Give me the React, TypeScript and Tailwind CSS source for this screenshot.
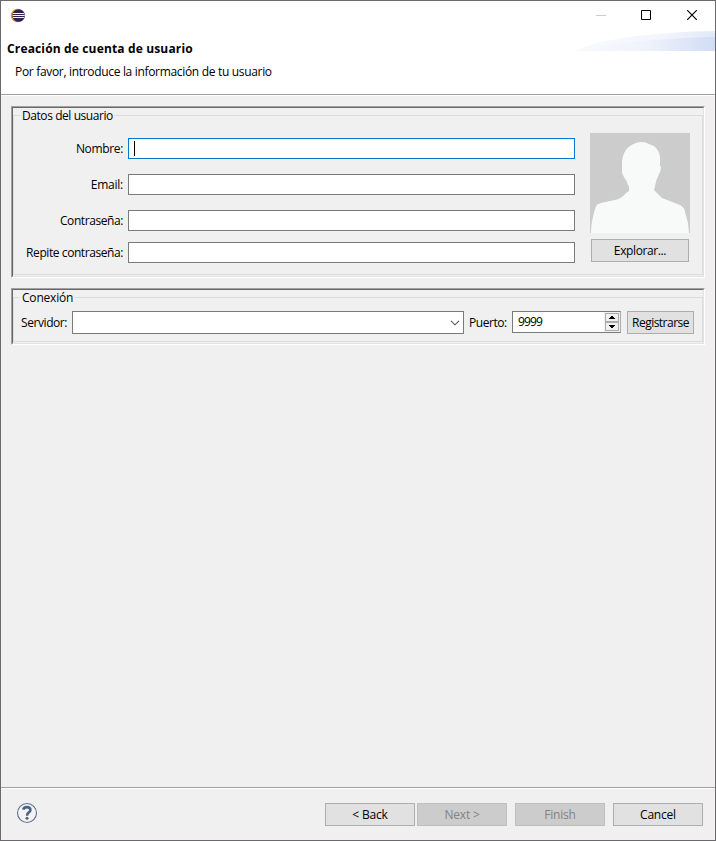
import type { ReactNode } from "react";

function Group({ title, titleClass, className, children }: { title: string; titleClass: string; className: string; children: ReactNode }) {
  return (
    <section className={`w-[694px] border border-t-[#a0a0a0] border-l-[#a0a0a0] border-r-white border-b-white ${className}`}>
      <div className="h-full border border-t-[#696969] border-l-[#696969] border-r-[#e3e3e3] border-b-[#e3e3e3]">
        <fieldset className="flex h-full flex-col">
          <div className="flex h-[15px] items-start">
            <span className="mt-[7px] h-px w-[7px] bg-[#dcdcdc]" />
            <legend className={`mx-[2px] whitespace-nowrap leading-[15px] ${titleClass}`}>{title}</legend>
            <span className="mt-[7px] h-px flex-1 bg-[#dcdcdc]" />
          </div>
          <div className="-mt-[7px] mb-px flex-1 border border-t-0 border-[#dcdcdc]">{children}</div>
        </fieldset>
      </div>
    </section>
  );
}

function Field({ label, labelClass, className = "", focused = false }: { label: string; labelClass: string; className?: string; focused?: boolean }) {
  return (
    <label className={`flex h-[21px] items-center ${className}`}>
      <span className="flex w-[110px] justify-end pr-[5px]">
        <span className={`whitespace-nowrap ${labelClass}`}>{label}</span>
      </span>
      <span className={`flex h-[21px] w-[447px] items-center border bg-white pl-[5px] ${focused ? "border-[#0078d7]" : "border-[#7a7a7a]"}`}>
        {focused && <span className="h-[15px] w-px bg-black" />}
      </span>
    </label>
  );
}

function Button({ children, className, textClass, disabled = false }: { children: ReactNode; className: string; textClass: string; disabled?: boolean }) {
  return (
    <button
      disabled={disabled}
      className={`flex h-[23px] items-center justify-center border whitespace-nowrap ${disabled ? "border-[#bfbfbf] bg-[#cccccc] text-[#838383]" : "border-[#adadad] bg-[#e1e1e1]"} ${className}`}
    >
      <span className={textClass}>{children}</span>
    </button>
  );
}

function EclipseLogo() {
  return (
    <svg width="16" height="16" viewBox="0 0 16 16">
      <circle cx="7.500" cy="7.500" r="6.700" fill="#f7941e" />
      <circle cx="8.600" cy="7.500" r="6.300" fill="#2c2255" />
      <path d="M3 5.500h11M2.500 7.500h12.300M3 9.500h11" stroke="#f4f3f8" strokeWidth="1" />
    </svg>
  );
}

function Swoosh() {
  return (
    <svg width="140" height="20" viewBox="0 0 140 20">
      <defs>
        <linearGradient id="outer" x1="0" x2="1">
          <stop offset="0" stopColor="#f8fafd" />
          <stop offset=".6" stopColor="#f3f6fc" />
          <stop offset="1" stopColor="#e2e9f8" />
        </linearGradient>
        <linearGradient id="inner" x1="0" x2="1">
          <stop offset="0" stopColor="#f8fafd" />
          <stop offset=".5" stopColor="#eff3fb" />
          <stop offset="1" stopColor="#d2dcf4" />
        </linearGradient>
      </defs>
      <path d="M0 20C24 7 85 1 140 0V20Z" fill="url(#outer)" />
      <path d="M0 20C34 13 80 7 140 6V20Z" fill="url(#inner)" />
    </svg>
  );
}

function Avatar() {
  return (
    <svg width="100" height="100" viewBox="0 0 100 100" className="bg-[#cccccc]">
      <path
        fill="#f8f9f9"
        d="M1 100C1 90 4 79 6 73Q7 71 11 70L27 66.500Q33 64 36 60L39 58V54L36 47Q32 42 32 38V28Q33 18 40 13Q46 9 51 9Q56 9 59 11L64 13Q69 17 70 24V33L71 34Q71 38 69 41Q66 47 65 53L64 57Q67 60 72 65L90 72Q95 75 95 79L98 90L99 100Z"
      />
    </svg>
  );
}

function HelpIcon() {
  return (
    <svg width="22" height="22" viewBox="0 0 22 22">
      <circle cx="11" cy="11" r="9.500" fill="#f3f3f3" stroke="#5b7294" strokeWidth="1.100" />
      <path d="M7.200 7.600Q7.900 5.100 11 5.100Q14.400 5.100 14.400 7.900Q14.400 9.500 12.600 10.600Q11.100 11.600 11.100 13.700" fill="none" stroke="#4d6284" strokeWidth="2.600" />
      <circle cx="11" cy="16.300" r="1.500" fill="#4d6284" />
    </svg>
  );
}

export default function App() {
  return (
    <div className="flex h-[841px] w-[716px] flex-col border border-[#6b696e] bg-[#f0f0f0] font-['Open_Sans','Noto_Sans',sans-serif] text-[12px] leading-[17px] text-black">
      <header className="flex h-[93px] shrink-0 flex-col bg-white">
        <div className="flex h-[30px] items-start justify-between">
          <div className="pt-[7px] pl-[9px]"><EclipseLogo /></div>
          <div className="flex w-[137px] pt-[9px]">
            <svg width="137" height="11" viewBox="0 0 137 11" fill="none">
              <path d="M18 5.500h10" stroke="#cccccc" />
              <path d="M63.500.5h9v9h-9z" stroke="#000" />
              <path d="M109.200.2l9.600 9.600m0-9.600l-9.600 9.600" stroke="#000" strokeWidth="1.200" />
            </svg>
          </div>
        </div>
        <div className="flex justify-between">
          <div>
            <h1 className="mt-[9px] ml-[6px] font-bold tracking-[0.15px] whitespace-nowrap">Creación de cuenta de usuario</h1>
            <p className="mt-[6px] ml-[14px] tracking-[-0.32px] whitespace-nowrap">Por favor, introduce la información de tu usuario</p>
          </div>
          <Swoosh />
        </div>
      </header>
      <div className="h-[2px] shrink-0 border-t border-t-[#a0a0a0] bg-white" />

      <main className="flex flex-1 flex-col pt-[10px] pl-[10px]">
        <Group title="Datos del usuario" titleClass="tracking-[-0.43px]" className="h-[172px]">
          <div className="flex pt-[14px]">
            <div className="pl-[4px]">
              <Field label="Nombre:" labelClass="tracking-[-0.34px]" className="mt-[8px]" focused />
              <Field label="Email:" labelClass="tracking-[-0.25px]" className="mt-[15px]" />
              <Field label="Contraseña:" labelClass="tracking-[-0.42px]" className="mt-[15px]" />
              <Field label="Repite contraseña:" labelClass="tracking-[-0.42px]" className="mt-[11px]" />
            </div>
            <div className="ml-[15px] flex flex-col items-center pt-[3px]">
              <Avatar />
              <Button className="mt-[6px] w-[98px]" textClass="tracking-[-0.38px]">Explorar...</Button>
            </div>
          </div>
        </Group>

        <Group title="Conexión" titleClass="tracking-[-0.2px]" className="mt-[10px] h-[57px]">
          <div className="flex items-start pt-[13px] pl-[7px]">
            <span className="mt-[3px] w-[51px] tracking-[-0.42px] whitespace-nowrap">Servidor:</span>
            <div className="flex h-[23px] w-[392px] items-center justify-end border border-[#7a7a7a] bg-white pr-[3px]">
              <svg width="10" height="6" viewBox="0 0 10 6" fill="none"><path d="M1 .8l4 4 4-4" stroke="#555" strokeWidth="1.100" /></svg>
            </div>
            <span className="mt-[3px] ml-[5px] w-[43px] tracking-[-0.45px] whitespace-nowrap">Puerto:</span>
            <div className="flex h-[22px] w-[109px] justify-between border border-[#7a7a7a] border-r-[#abadb3] bg-white">
              <span className="pt-[1px] pl-[5px] tracking-[-0.85px]">9999</span>
              <div className="flex w-[16px] flex-col bg-[#f0f0f0] p-px">
                <span className="flex h-[9px] items-center justify-center border border-[#acacac]">
                  <svg width="6" height="3" viewBox="0 0 6 3"><path d="M2 0h2v1h1v1h1v1H0V2h1V1h1z" /></svg>
                </span>
                <span className="flex h-[9px] items-center justify-center border border-[#acacac]">
                  <svg width="6" height="3" viewBox="0 0 6 3"><path d="M0 0h6v1H5v1H4v1H2V2H1V1H0z" /></svg>
                </span>
              </div>
            </div>
            <Button className="ml-[6px] w-[67px]" textClass="tracking-[-0.52px]">Registrarse</Button>
          </div>
        </Group>
      </main>

      <div className="h-[2px] shrink-0 border-t border-t-[#a0a0a0] bg-white" />
      <footer className="flex h-[51px] shrink-0 items-start justify-between pr-[12px] pl-[15px]">
        <div className="pt-[13px]"><HelpIcon /></div>
        <div className="flex pt-[14px]">
          <Button className="w-[90px]" textClass="tracking-[-0.2px]">&lt; Back</Button>
          <Button className="ml-[2px] w-[90px]" textClass="tracking-[-0.2px]" disabled>Next &gt;</Button>
          <Button className="ml-[8px] w-[90px]" textClass="tracking-[-0.2px]" disabled>Finish</Button>
          <Button className="ml-[8px] w-[90px]" textClass="tracking-[-0.2px]">Cancel</Button>
        </div>
      </footer>
    </div>
  );
}
